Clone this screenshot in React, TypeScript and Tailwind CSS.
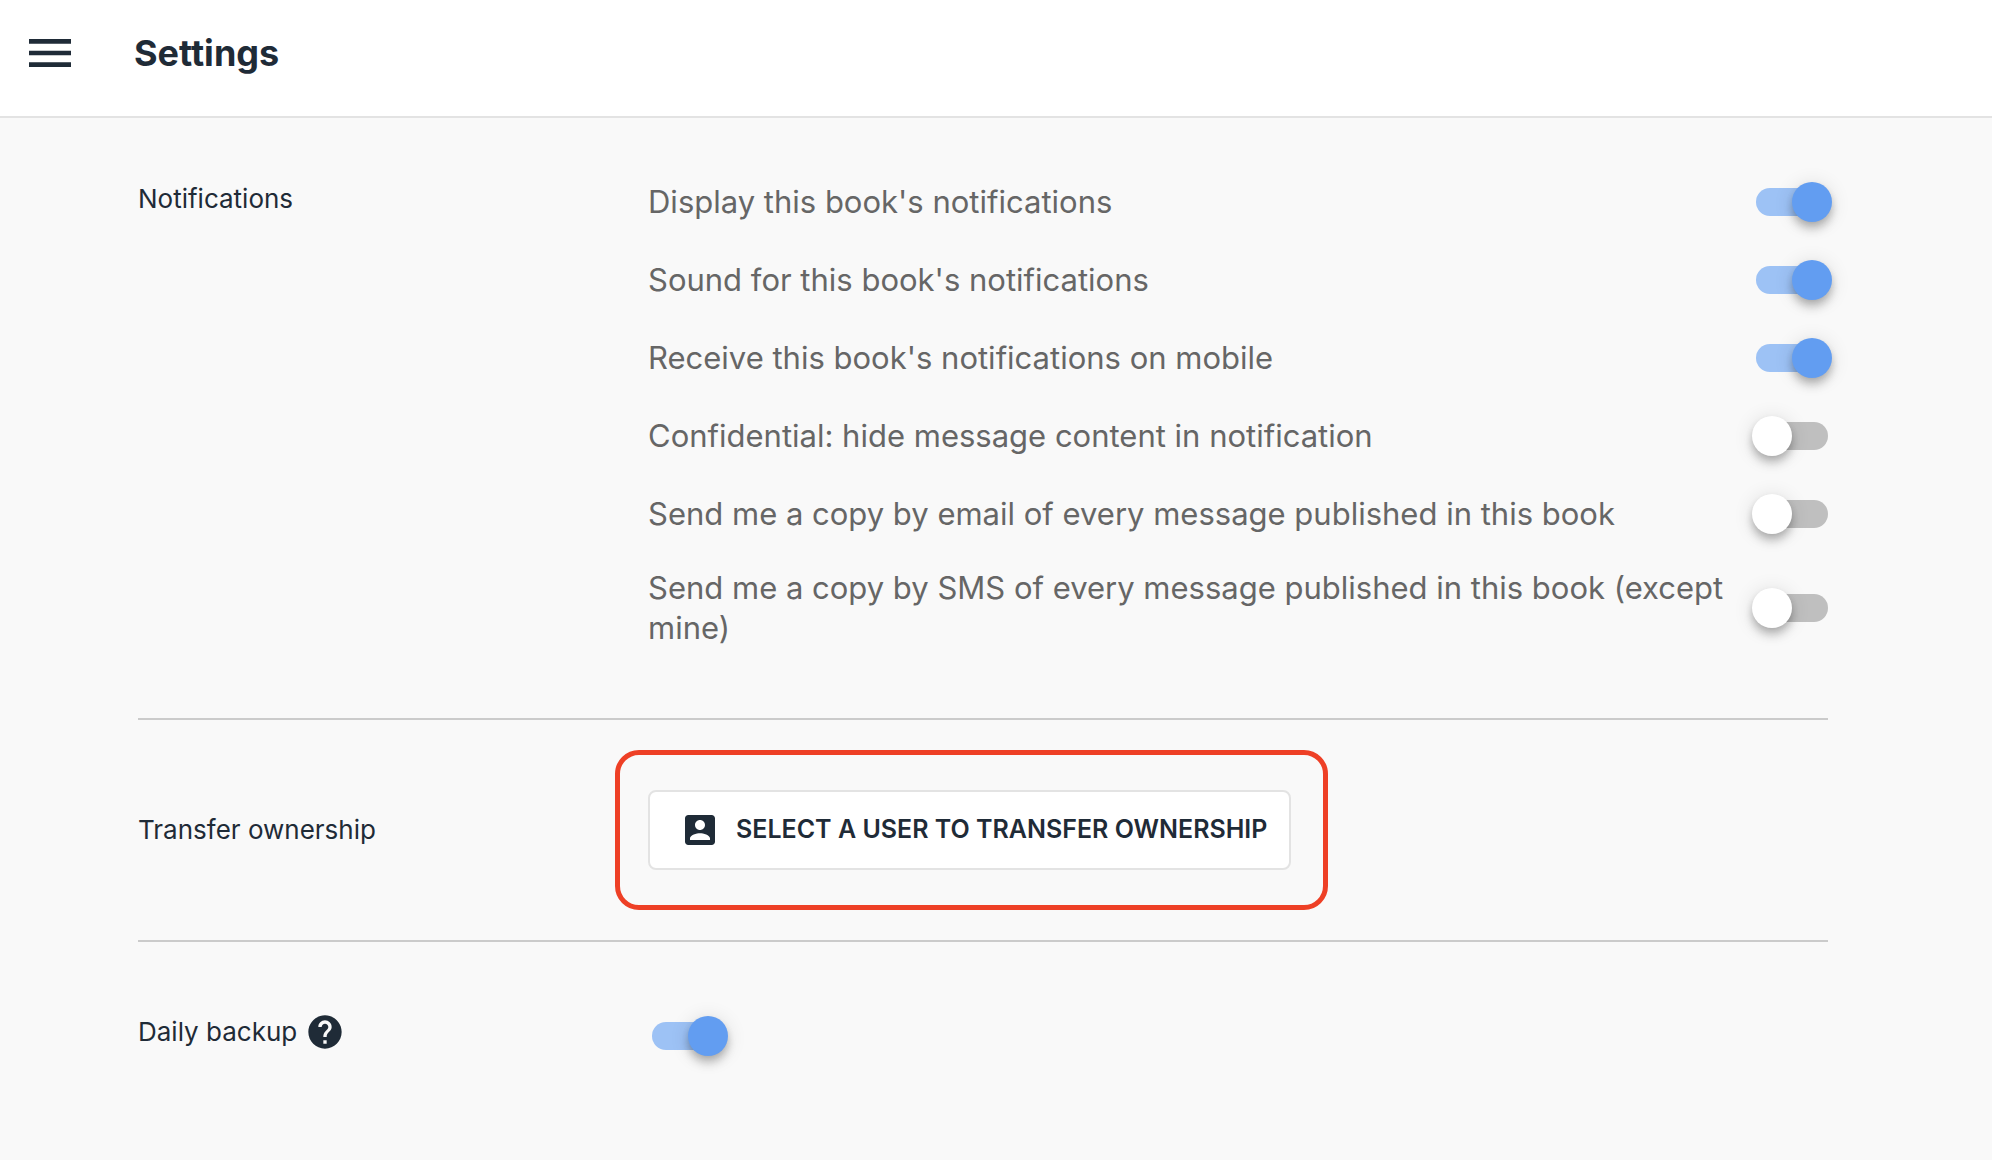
import { useState } from "react"
import { MdMenu } from "react-icons/md"

const NOTIFICATIONS = [
  { id: "display", label: "Display this book's notifications", on: true },
  { id: "sound", label: "Sound for this book's notifications", on: true },
  { id: "mobile", label: "Receive this book's notifications on mobile", on: true },
  { id: "confidential", label: "Confidential: hide message content in notification", on: false },
  { id: "email", label: "Send me a copy by email of every message published in this book", on: false },
  { id: "sms", label: "Send me a copy by SMS of every message published in this book (except mine)", on: false },
]

function AccountBoxIcon() {
  return (
    <svg viewBox="0 0 24 24" fill="currentColor" className="size-10" aria-hidden="true">
      <path d="M3 5v14c0 1.1.89 2 2 2h14c1.1 0 2-.9 2-2V5c0-1.1-.9-2-2-2H5c-1.11 0-2 .9-2 2zm12 4c0 1.66-1.34 3-3 3s-3-1.34-3-3 1.34-3 3-3 3 1.34 3 3zm-9 8c0-2 4-3.1 6-3.1s6 1.1 6 3.1v1H6v-1z" />
    </svg>
  )
}

function HelpIcon() {
  return (
    <svg viewBox="0 0 24 24" fill="currentColor" className="size-10" aria-hidden="true">
      <path d="M12 2C6.48 2 2 6.48 2 12s4.48 10 10 10 10-4.48 10-10S17.52 2 12 2zm1 17h-2v-2h2v2zm2.07-7.75l-.9.92C13.45 12.9 13 13.5 13 15h-2v-.5c0-1.1.45-2.1 1.17-2.83l1.24-1.26c.37-.36.59-.86.59-1.41 0-1.1-.9-2-2-2s-2 .9-2 2H8c0-2.21 1.79-4 4-4s4 1.79 4 4c0 .88-.36 1.68-.93 2.25z" />
    </svg>
  )
}

function Switch({ id, defaultOn }: { id: string; defaultOn: boolean }) {
  const [on, setOn] = useState(defaultOn)
  return (
    <input
      id={id}
      type="checkbox"
      role="switch"
      checked={on}
      onChange={(e) => setOn(e.target.checked)}
      className="relative h-7 w-18 shrink-0 cursor-pointer appearance-none rounded-full bg-[#bfbfbf] before:absolute before:-top-1.5 before:-left-1 before:size-10 before:rounded-full before:bg-white before:shadow-[0_4px_8px_-2px_rgba(0,0,0,0.2),0_8px_10px_0_rgba(0,0,0,0.14),0_2px_20px_0_rgba(0,0,0,0.12)] before:transition-all checked:bg-[#9dc2f5] checked:before:left-9 checked:before:bg-[#629df1]"
    />
  )
}

export default function App() {
  return (
    <div className="min-h-screen bg-[#f9f9f9] font-['Inter',sans-serif] text-[#1f2b37]">
      <header className="flex items-center border-b-2 border-[#e3e3e3] bg-white px-[22px] pt-[25px] pb-[35px]">
        <button type="button" aria-label="Menu">
          <MdMenu className="size-14" />
        </button>
        <h1 className="ml-14 text-[36px] leading-14 font-bold">Settings</h1>
      </header>

      <main className="pr-[164px] pl-[138px]">
        <section className="flex border-b-2 border-[#cbcbcb] pt-[45px] pb-[55px]">
          <h2 className="w-[510px] shrink-0 pt-4 text-[26px] leading-10">Notifications</h2>
          <div className="flex-1">
            {NOTIFICATIONS.map((n) => (
              <div key={n.id} className="flex min-h-[78px] items-center justify-between gap-4 py-[15px]">
                <label htmlFor={n.id} className="text-[31px] leading-10 text-[#666]">
                  {n.label}
                </label>
                <Switch id={n.id} defaultOn={n.on} />
              </div>
            ))}
          </div>
        </section>

        <section className="flex items-center border-b-2 border-[#cbcbcb] py-[30px]">
          <h2 className="w-[510px] shrink-0 text-[26px] leading-10">Transfer ownership</h2>
          <div className="-ml-[33px] rounded-[24px] border-5 border-[#ee4026] py-[35px] pr-8 pl-7">
            <button
              type="button"
              className="flex h-20 items-center gap-4 rounded-lg border-2 border-[#e3e3e3] bg-white pr-[22px] pl-[30px] text-[25px] font-semibold uppercase"
            >
              <AccountBoxIcon />
              Select a user to transfer ownership
            </button>
          </div>
        </section>

        <section className="flex items-start py-[70px]">
          <div className="flex w-[510px] shrink-0 items-center gap-2">
            <label htmlFor="backup" className="text-[26px] leading-10">
              Daily backup
            </label>
            <button type="button" aria-label="Help">
              <HelpIcon />
            </button>
          </div>
          <div className="flex pt-2.5 pl-1">
            <Switch id="backup" defaultOn />
          </div>
        </section>
      </main>
    </div>
  )
}
